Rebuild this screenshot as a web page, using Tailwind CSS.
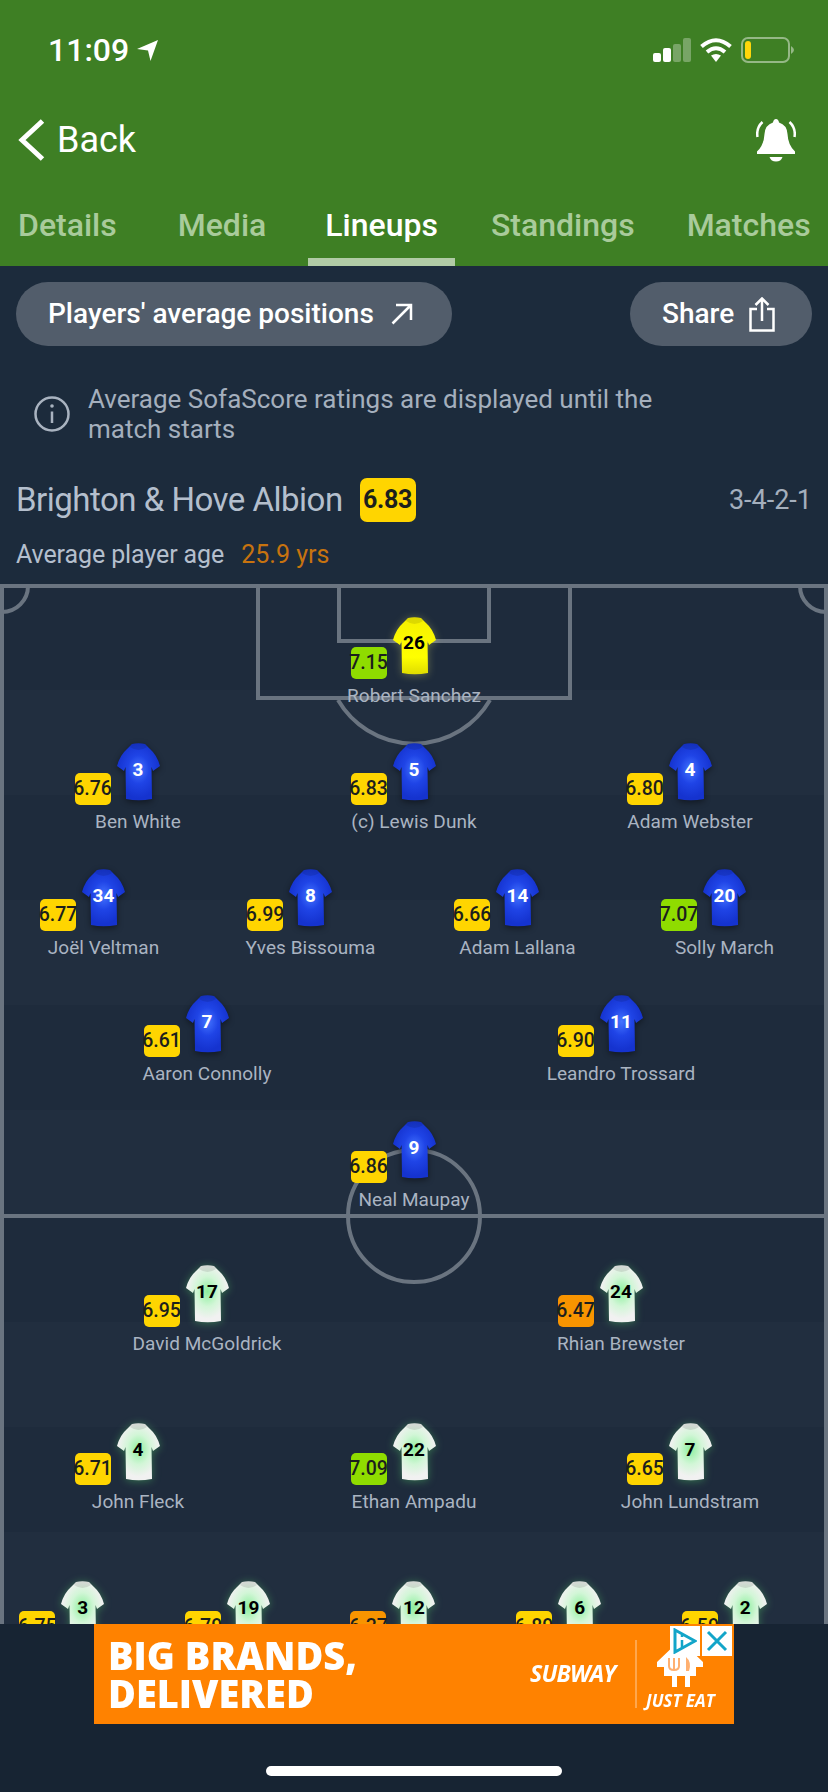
<!DOCTYPE html>
<html lang="en">

<head>
    <meta charset="UTF-8">
    <meta name="viewport" content="width=device-width, initial-scale=1.0">
    <title>Lineups</title>
    <script src="https://cdn.jsdelivr.net/npm/@tailwindcss/browser@4"></script>
</head>

<body class="bg-[#172433] font-['Roboto',sans-serif]">
    <!-- shared shirt shape -->
    <svg class="absolute w-0 h-0">
        <defs>
            <radialGradient id="blue" cx="50%" cy="46%" r="50%">
                <stop offset="0%" stop-color="#4474ff" />
                <stop offset="50%" stop-color="#1f44e6" />
                <stop offset="100%" stop-color="#1533cf" />
            </radialGradient>
            <radialGradient id="white" cx="50%" cy="46%" r="48%">
                <stop offset="0%" stop-color="#8def9d" />
                <stop offset="55%" stop-color="#d2f6d7" />
                <stop offset="100%" stop-color="#f1f1f1" />
            </radialGradient>
            <linearGradient id="yellow" x1="0" y1="0" x2="0" y2="1">
                <stop offset="0%" stop-color="#f6f000" />
                <stop offset="70%" stop-color="#ffff00" />
                <stop offset="100%" stop-color="#dfdc00" />
            </linearGradient>
            <symbol id="shirt" viewBox="0 0 43 58">
                <path d="M15 1Q21.500 -0.500 28 1L33 6Q40 12 43 23L36 28L34.500 24L35 56Q21.500 58.500 9 56L8.500 24L7 28L0 23Q3 12 10 6Z" />
                <path d="M15 1Q21.500 -0.500 28 1L30 4Q21.500 10 13 4Z" fill="#000" fill-opacity=".1" />
            </symbol>
        </defs>
    </svg>

    <div class="w-[828px] h-[1792px] flex flex-col overflow-hidden">
        <!-- Header -->
        <header class="bg-[#3e7f24] text-white h-[266px] shrink-0">
            <div class="h-[100px] flex items-center justify-between pl-[48px] pr-[33px]">
                <div class="flex items-center gap-[8px]">
                    <span class="text-[32px] font-medium">11:09</span>
                    <svg class="w-[21px] h-[21px]" viewBox="0 0 21 21" fill="#fff"><path d="M21 0L13.500 21L11 10.500L0 9Z" /></svg>
                </div>
                <div class="flex items-center">
                    <svg class="w-[38px] h-[24px]" viewBox="0 0 38 24">
                        <rect x="0" y="15" width="8" height="9" rx="2" fill="#fff" />
                        <rect x="10" y="10" width="8" height="14" rx="2" fill="#fff" />
                        <rect x="20" y="6" width="8" height="18" rx="2" fill="#fff" fill-opacity=".3" />
                        <rect x="30" y="0" width="8" height="24" rx="2" fill="#fff" fill-opacity=".3" />
                    </svg>
                    <svg class="w-[32px] h-[26px] ml-[9px]" viewBox="0 0 32 26" fill="none" stroke="#fff" stroke-width="4">
                        <path d="M1.500 9.500Q16 -3 30.500 9.500" />
                        <path d="M7 15Q16 7.500 25 15" />
                        <path d="M11 18.500L16 25L21 18.500Q16 15.500 11 18.500Z" fill="#fff" stroke="none" />
                    </svg>
                    <svg class="w-[54px] h-[26px] ml-[9px]" viewBox="0 0 54 26" fill="none">
                        <rect x="1" y="1" width="47" height="24" rx="6" stroke="#fff" stroke-opacity=".45" stroke-width="2" />
                        <rect x="4" y="4" width="6" height="18" rx="3" fill="#ffd60a" />
                        <path d="M50 9Q53 11 53 13Q53 15 50 17Z" fill="#fff" fill-opacity=".45" />
                    </svg>
                </div>
            </div>
            <div class="h-[80px] flex items-center justify-between pl-[18px] pr-[32px]">
                <div class="flex items-center gap-[12px]">
                    <svg class="w-[27px] h-[42px]" viewBox="0 0 27 42" fill="none" stroke="#fff" stroke-width="5"><path d="M24.500 2L4 21L24.500 40" /></svg>
                    <span class="text-[36px] leading-none">Back</span>
                </div>
                <svg class="w-[40px] h-[43px]" viewBox="0 0 40 43" fill="#fff">
                    <path d="M20 0Q22.500 0 23 3.500Q31 6 31.500 15Q32 26 39 32.500L39 35L1 35L1 32.500Q8 26 8.500 15Q9 6 17 3.500Q17.500 0 20 0Z" />
                    <path d="M13.500 38L26.500 38Q25 42.500 20 42.500Q15 42.500 13.500 38Z" />
                    <path d="M6.500 3Q0 9 1.500 18M33.500 3Q40 9 38.500 18" fill="none" stroke="#fff" stroke-width="2.500" />
                </svg>
            </div>
            <nav class="flex text-[32px] leading-[36px] font-medium text-[#a9cb9b] pl-[1px]">
                <a class="shrink-0 px-[17px] pt-[27px] pb-[15px] border-b-8 border-transparent">Details</a>
                <a class="shrink-0 px-[17px] pt-[27px] pb-[15px] border-b-8 border-transparent ml-[27px]">Media</a>
                <a class="shrink-0 px-[17px] pt-[27px] pb-[15px] border-b-8 border-[#b1cba6] text-white ml-[25px]">Lineups</a>
                <a class="shrink-0 px-[17px] pt-[27px] pb-[15px] border-b-8 border-transparent ml-[19px]">Standings</a>
                <a class="shrink-0 px-[17px] pt-[27px] pb-[15px] border-b-8 border-transparent ml-[18px]">Matches</a>
            </nav>
        </header>

        <!-- Actions and team summary -->
        <section class="bg-[#1c2b3c] h-[318px] shrink-0 pt-[16px]">
            <div class="flex justify-between px-[16px]">
                <button class="w-[436px] h-[64px] rounded-full bg-[#525d6b] text-white text-[28px] font-medium flex items-center pl-[32px] gap-[17px]">
                    Players' average positions
                    <svg class="w-[22px] h-[22px]" viewBox="0 0 22 22" fill="none" stroke="#fff" stroke-width="2.500"><path d="M1.500 20.500L20 2M5 2L20 2L20 17" /></svg>
                </button>
                <button class="w-[182px] h-[64px] rounded-full bg-[#525d6b] text-white text-[28px] font-medium flex items-center pl-[32px] gap-[15px]">
                    Share
                    <svg class="w-[26px] h-[35px]" viewBox="0 0 26 35" fill="none" stroke="#fff" stroke-width="2.500"><path d="M8 12L1.500 12L1.500 33.500L24.500 33.500L24.500 12L18 12M13 24L13 2M6.500 8L13 1.500L19.500 8" /></svg>
                </button>
            </div>
            <div class="flex items-center mt-[38px] pl-[34px] gap-[18px]">
                <svg class="w-[36px] h-[36px] shrink-0" viewBox="0 0 36 36" fill="none" stroke="#a9b3c0" stroke-width="2.500">
                    <circle cx="18" cy="18" r="16.500" />
                    <path d="M18 15.500L18 27" />
                    <circle cx="18" cy="10" r="1.800" fill="#a9b3c0" stroke="none" />
                </svg>
                <p class="text-[26px] leading-[30px] text-[#a4afbd] w-[600px]">Average SofaScore ratings are displayed until the match starts</p>
            </div>
            <div class="flex items-center justify-between mt-[31px] pl-[16px] pr-[16px]">
                <div class="flex items-center gap-[17px]">
                    <h2 class="text-[33px] tracking-[-0.5px] text-[#b4bfcd]">Brighton &amp; Hove Albion</h2>
                    <span class="w-[56px] h-[44px] rounded-[7px] bg-[#ffd500] text-[#1c1f1d] text-[25px] tracking-[-0.3px] font-bold flex items-center justify-center">6.83</span>
                </div>
                <span class="text-[27px] text-[#a4afbd]">3-4-2-1</span>
            </div>
            <div class="flex mt-[14px] pl-[16px] gap-[17px] text-[25px] leading-[32px]">
                <span class="text-[#b4bfcd] tracking-[-0.1px]">Average player age</span>
                <span class="text-[#c7730f]">25.9 yrs</span>
            </div>
        </section>

        <!-- Pitch -->
        <section class="relative h-[1040px] shrink-0 overflow-hidden bg-[#1e2b3c] text-[#aab4c2]">
            <svg class="absolute inset-0 w-[828px] h-[1040px]" viewBox="0 0 828 1040" fill="none" stroke="#6a7480" stroke-width="4">
                <g fill="#212e3f" stroke="none">
                    <rect x="0" y="106" width="828" height="105" />
                    <rect x="0" y="316" width="828" height="105" />
                    <rect x="0" y="526" width="828" height="106" />
                    <rect x="0" y="738" width="828" height="105" />
                    <rect x="0" y="948" width="828" height="92" />
                </g>
                <path d="M2 0L2 1040M826 0L826 1040M0 2L828 2M0 632L828 632" />
                <path d="M258 2L258 114L570 114L570 2M339 2L339 57L489 57L489 2" />
                <path d="M338 116A88 88 0 0 0 490 116" />
                <path d="M28 2A26 26 0 0 1 2 28M800 2A26 26 0 0 0 826 28" />
                <circle cx="414" cy="632" r="66" />
            </svg>

            <div class="relative">
                <!-- Brighton -->
                <div class="h-[632px] pt-[33px] flex flex-col">
                    <div class="h-[126px] flex">
                        <div class="flex-1 flex flex-col items-center">
                            <div class="relative w-[43px] h-[58px]">
                                <svg class="w-[43px] h-[58px] fill-[url(#yellow)] drop-shadow-[0_1px_4px_rgba(255,255,120,0.3)]"><use href="#shirt" /></svg>
                                <span class="absolute inset-x-0 top-[14px] text-center text-[19px] leading-[24px] font-bold text-black">26</span>
                                <span class="absolute left-[-42px] top-[30px] w-[36px] h-[32px] rounded-[5px] bg-[#8fdc00] text-[#1c1f1d] text-[19.5px] font-medium flex items-center justify-center">7.15</span>
                            </div>
                            <span class="mt-[9px] text-[19px] tracking-[0.05px] leading-[24px] whitespace-nowrap">Robert Sanchez</span>
                        </div>
                    </div>
                    <div class="h-[126px] flex">
                        <div class="flex-1 flex flex-col items-center">
                            <div class="relative w-[43px] h-[58px]">
                                <svg class="w-[43px] h-[58px] fill-[url(#blue)] drop-shadow-[0_2px_3px_rgba(0,0,0,0.45)]"><use href="#shirt" /></svg>
                                <span class="absolute inset-x-0 top-[15px] text-center text-[19px] leading-[24px] font-bold text-white">3</span>
                                <span class="absolute left-[-42px] top-[30px] w-[36px] h-[32px] rounded-[5px] bg-[#ffd500] text-[#1c1f1d] text-[19.5px] font-medium flex items-center justify-center">6.76</span>
                            </div>
                            <span class="mt-[9px] text-[19px] tracking-[0.05px] leading-[24px] whitespace-nowrap">Ben White</span>
                        </div>
                        <div class="flex-1 flex flex-col items-center">
                            <div class="relative w-[43px] h-[58px]">
                                <svg class="w-[43px] h-[58px] fill-[url(#blue)] drop-shadow-[0_2px_3px_rgba(0,0,0,0.45)]"><use href="#shirt" /></svg>
                                <span class="absolute inset-x-0 top-[15px] text-center text-[19px] leading-[24px] font-bold text-white">5</span>
                                <span class="absolute left-[-42px] top-[30px] w-[36px] h-[32px] rounded-[5px] bg-[#ffd500] text-[#1c1f1d] text-[19.5px] font-medium flex items-center justify-center">6.83</span>
                            </div>
                            <span class="mt-[9px] text-[19px] tracking-[0.05px] leading-[24px] whitespace-nowrap">(c) Lewis Dunk</span>
                        </div>
                        <div class="flex-1 flex flex-col items-center">
                            <div class="relative w-[43px] h-[58px]">
                                <svg class="w-[43px] h-[58px] fill-[url(#blue)] drop-shadow-[0_2px_3px_rgba(0,0,0,0.45)]"><use href="#shirt" /></svg>
                                <span class="absolute inset-x-0 top-[15px] text-center text-[19px] leading-[24px] font-bold text-white">4</span>
                                <span class="absolute left-[-42px] top-[30px] w-[36px] h-[32px] rounded-[5px] bg-[#ffd500] text-[#1c1f1d] text-[19.5px] font-medium flex items-center justify-center">6.80</span>
                            </div>
                            <span class="mt-[9px] text-[19px] tracking-[0.05px] leading-[24px] whitespace-nowrap">Adam Webster</span>
                        </div>
                    </div>
                    <div class="h-[126px] flex">
                        <div class="flex-1 flex flex-col items-center">
                            <div class="relative w-[43px] h-[58px]">
                                <svg class="w-[43px] h-[58px] fill-[url(#blue)] drop-shadow-[0_2px_3px_rgba(0,0,0,0.45)]"><use href="#shirt" /></svg>
                                <span class="absolute inset-x-0 top-[15px] text-center text-[19px] leading-[24px] font-bold text-white">34</span>
                                <span class="absolute left-[-42px] top-[30px] w-[36px] h-[32px] rounded-[5px] bg-[#ffd500] text-[#1c1f1d] text-[19.5px] font-medium flex items-center justify-center">6.77</span>
                            </div>
                            <span class="mt-[9px] text-[19px] tracking-[0.05px] leading-[24px] whitespace-nowrap">Joël Veltman</span>
                        </div>
                        <div class="flex-1 flex flex-col items-center">
                            <div class="relative w-[43px] h-[58px]">
                                <svg class="w-[43px] h-[58px] fill-[url(#blue)] drop-shadow-[0_2px_3px_rgba(0,0,0,0.45)]"><use href="#shirt" /></svg>
                                <span class="absolute inset-x-0 top-[15px] text-center text-[19px] leading-[24px] font-bold text-white">8</span>
                                <span class="absolute left-[-42px] top-[30px] w-[36px] h-[32px] rounded-[5px] bg-[#ffd500] text-[#1c1f1d] text-[19.5px] font-medium flex items-center justify-center">6.99</span>
                            </div>
                            <span class="mt-[9px] text-[19px] tracking-[0.05px] leading-[24px] whitespace-nowrap">Yves Bissouma</span>
                        </div>
                        <div class="flex-1 flex flex-col items-center">
                            <div class="relative w-[43px] h-[58px]">
                                <svg class="w-[43px] h-[58px] fill-[url(#blue)] drop-shadow-[0_2px_3px_rgba(0,0,0,0.45)]"><use href="#shirt" /></svg>
                                <span class="absolute inset-x-0 top-[15px] text-center text-[19px] leading-[24px] font-bold text-white">14</span>
                                <span class="absolute left-[-42px] top-[30px] w-[36px] h-[32px] rounded-[5px] bg-[#ffd500] text-[#1c1f1d] text-[19.5px] font-medium flex items-center justify-center">6.66</span>
                            </div>
                            <span class="mt-[9px] text-[19px] tracking-[0.05px] leading-[24px] whitespace-nowrap">Adam Lallana</span>
                        </div>
                        <div class="flex-1 flex flex-col items-center">
                            <div class="relative w-[43px] h-[58px]">
                                <svg class="w-[43px] h-[58px] fill-[url(#blue)] drop-shadow-[0_2px_3px_rgba(0,0,0,0.45)]"><use href="#shirt" /></svg>
                                <span class="absolute inset-x-0 top-[15px] text-center text-[19px] leading-[24px] font-bold text-white">20</span>
                                <span class="absolute left-[-42px] top-[30px] w-[36px] h-[32px] rounded-[5px] bg-[#8fdc00] text-[#1c1f1d] text-[19.5px] font-medium flex items-center justify-center">7.07</span>
                            </div>
                            <span class="mt-[9px] text-[19px] tracking-[0.05px] leading-[24px] whitespace-nowrap">Solly March</span>
                        </div>
                    </div>
                    <div class="h-[126px] flex">
                        <div class="flex-1 flex flex-col items-center">
                            <div class="relative w-[43px] h-[58px]">
                                <svg class="w-[43px] h-[58px] fill-[url(#blue)] drop-shadow-[0_2px_3px_rgba(0,0,0,0.45)]"><use href="#shirt" /></svg>
                                <span class="absolute inset-x-0 top-[15px] text-center text-[19px] leading-[24px] font-bold text-white">7</span>
                                <span class="absolute left-[-42px] top-[30px] w-[36px] h-[32px] rounded-[5px] bg-[#ffd500] text-[#1c1f1d] text-[19.5px] font-medium flex items-center justify-center">6.61</span>
                            </div>
                            <span class="mt-[9px] text-[19px] tracking-[0.05px] leading-[24px] whitespace-nowrap">Aaron Connolly</span>
                        </div>
                        <div class="flex-1 flex flex-col items-center">
                            <div class="relative w-[43px] h-[58px]">
                                <svg class="w-[43px] h-[58px] fill-[url(#blue)] drop-shadow-[0_2px_3px_rgba(0,0,0,0.45)]"><use href="#shirt" /></svg>
                                <span class="absolute inset-x-0 top-[15px] text-center text-[19px] leading-[24px] font-bold text-white">11</span>
                                <span class="absolute left-[-42px] top-[30px] w-[36px] h-[32px] rounded-[5px] bg-[#ffd500] text-[#1c1f1d] text-[19.5px] font-medium flex items-center justify-center">6.90</span>
                            </div>
                            <span class="mt-[9px] text-[19px] tracking-[0.05px] leading-[24px] whitespace-nowrap">Leandro Trossard</span>
                        </div>
                    </div>
                    <div class="h-[94px] flex">
                        <div class="flex-1 flex flex-col items-center">
                            <div class="relative w-[43px] h-[58px]">
                                <svg class="w-[43px] h-[58px] fill-[url(#blue)] drop-shadow-[0_2px_3px_rgba(0,0,0,0.45)]"><use href="#shirt" /></svg>
                                <span class="absolute inset-x-0 top-[15px] text-center text-[19px] leading-[24px] font-bold text-white">9</span>
                                <span class="absolute left-[-42px] top-[30px] w-[36px] h-[32px] rounded-[5px] bg-[#ffd500] text-[#1c1f1d] text-[19.5px] font-medium flex items-center justify-center">6.86</span>
                            </div>
                            <span class="mt-[9px] text-[19px] tracking-[0.05px] leading-[24px] whitespace-nowrap">Neal Maupay</span>
                        </div>
                    </div>
                </div>

                <!-- Sheffield United -->
                <div class="pt-[49px] flex flex-col">
                    <div class="h-[158px] flex">
                        <div class="flex-1 flex flex-col items-center">
                            <div class="relative w-[43px] h-[58px]">
                                <svg class="w-[43px] h-[58px] fill-[url(#white)] drop-shadow-[0_1px_4px_rgba(90,220,110,0.4)]"><use href="#shirt" /></svg>
                                <span class="absolute inset-x-0 top-[15px] text-center text-[19px] leading-[24px] font-bold text-black">17</span>
                                <span class="absolute left-[-42px] top-[30px] w-[36px] h-[32px] rounded-[5px] bg-[#ffd500] text-[#1c1f1d] text-[19.5px] font-medium flex items-center justify-center">6.95</span>
                            </div>
                            <span class="mt-[9px] text-[19px] tracking-[0.05px] leading-[24px] whitespace-nowrap">David McGoldrick</span>
                        </div>
                        <div class="flex-1 flex flex-col items-center">
                            <div class="relative w-[43px] h-[58px]">
                                <svg class="w-[43px] h-[58px] fill-[url(#white)] drop-shadow-[0_1px_4px_rgba(90,220,110,0.4)]"><use href="#shirt" /></svg>
                                <span class="absolute inset-x-0 top-[15px] text-center text-[19px] leading-[24px] font-bold text-black">24</span>
                                <span class="absolute left-[-42px] top-[30px] w-[36px] h-[32px] rounded-[5px] bg-[#f89400] text-[#1c1f1d] text-[19.5px] font-medium flex items-center justify-center">6.47</span>
                            </div>
                            <span class="mt-[9px] text-[19px] tracking-[0.05px] leading-[24px] whitespace-nowrap">Rhian Brewster</span>
                        </div>
                    </div>
                    <div class="h-[158px] flex">
                        <div class="flex-1 flex flex-col items-center">
                            <div class="relative w-[43px] h-[58px]">
                                <svg class="w-[43px] h-[58px] fill-[url(#white)] drop-shadow-[0_1px_4px_rgba(90,220,110,0.4)]"><use href="#shirt" /></svg>
                                <span class="absolute inset-x-0 top-[15px] text-center text-[19px] leading-[24px] font-bold text-black">4</span>
                                <span class="absolute left-[-42px] top-[30px] w-[36px] h-[32px] rounded-[5px] bg-[#ffd500] text-[#1c1f1d] text-[19.5px] font-medium flex items-center justify-center">6.71</span>
                            </div>
                            <span class="mt-[9px] text-[19px] tracking-[0.05px] leading-[24px] whitespace-nowrap">John Fleck</span>
                        </div>
                        <div class="flex-1 flex flex-col items-center">
                            <div class="relative w-[43px] h-[58px]">
                                <svg class="w-[43px] h-[58px] fill-[url(#white)] drop-shadow-[0_1px_4px_rgba(90,220,110,0.4)]"><use href="#shirt" /></svg>
                                <span class="absolute inset-x-0 top-[15px] text-center text-[19px] leading-[24px] font-bold text-black">22</span>
                                <span class="absolute left-[-42px] top-[30px] w-[36px] h-[32px] rounded-[5px] bg-[#8fdc00] text-[#1c1f1d] text-[19.5px] font-medium flex items-center justify-center">7.09</span>
                            </div>
                            <span class="mt-[9px] text-[19px] tracking-[0.05px] leading-[24px] whitespace-nowrap">Ethan Ampadu</span>
                        </div>
                        <div class="flex-1 flex flex-col items-center">
                            <div class="relative w-[43px] h-[58px]">
                                <svg class="w-[43px] h-[58px] fill-[url(#white)] drop-shadow-[0_1px_4px_rgba(90,220,110,0.4)]"><use href="#shirt" /></svg>
                                <span class="absolute inset-x-0 top-[15px] text-center text-[19px] leading-[24px] font-bold text-black">7</span>
                                <span class="absolute left-[-42px] top-[30px] w-[36px] h-[32px] rounded-[5px] bg-[#ffd500] text-[#1c1f1d] text-[19.5px] font-medium flex items-center justify-center">6.65</span>
                            </div>
                            <span class="mt-[9px] text-[19px] tracking-[0.05px] leading-[24px] whitespace-nowrap">John Lundstram</span>
                        </div>
                    </div>
                    <div class="h-[158px] flex">
                        <div class="flex-1 flex flex-col items-center">
                            <div class="relative w-[43px] h-[58px]">
                                <svg class="w-[43px] h-[58px] fill-[url(#white)] drop-shadow-[0_1px_4px_rgba(90,220,110,0.4)]"><use href="#shirt" /></svg>
                                <span class="absolute inset-x-0 top-[15px] text-center text-[19px] leading-[24px] font-bold text-black">3</span>
                                <span class="absolute left-[-42px] top-[30px] w-[36px] h-[32px] rounded-[5px] bg-[#ffd500] text-[#1c1f1d] text-[19.5px] font-medium flex items-center justify-center">6.75</span>
                            </div>
                        </div>
                        <div class="flex-1 flex flex-col items-center">
                            <div class="relative w-[43px] h-[58px]">
                                <svg class="w-[43px] h-[58px] fill-[url(#white)] drop-shadow-[0_1px_4px_rgba(90,220,110,0.4)]"><use href="#shirt" /></svg>
                                <span class="absolute inset-x-0 top-[15px] text-center text-[19px] leading-[24px] font-bold text-black">19</span>
                                <span class="absolute left-[-42px] top-[30px] w-[36px] h-[32px] rounded-[5px] bg-[#ffd500] text-[#1c1f1d] text-[19.5px] font-medium flex items-center justify-center">6.79</span>
                            </div>
                        </div>
                        <div class="flex-1 flex flex-col items-center">
                            <div class="relative w-[43px] h-[58px]">
                                <svg class="w-[43px] h-[58px] fill-[url(#white)] drop-shadow-[0_1px_4px_rgba(90,220,110,0.4)]"><use href="#shirt" /></svg>
                                <span class="absolute inset-x-0 top-[15px] text-center text-[19px] leading-[24px] font-bold text-black">12</span>
                                <span class="absolute left-[-42px] top-[30px] w-[36px] h-[32px] rounded-[5px] bg-[#f89400] text-[#1c1f1d] text-[19.5px] font-medium flex items-center justify-center">6.37</span>
                            </div>
                        </div>
                        <div class="flex-1 flex flex-col items-center">
                            <div class="relative w-[43px] h-[58px]">
                                <svg class="w-[43px] h-[58px] fill-[url(#white)] drop-shadow-[0_1px_4px_rgba(90,220,110,0.4)]"><use href="#shirt" /></svg>
                                <span class="absolute inset-x-0 top-[15px] text-center text-[19px] leading-[24px] font-bold text-black">6</span>
                                <span class="absolute left-[-42px] top-[30px] w-[36px] h-[32px] rounded-[5px] bg-[#ffd500] text-[#1c1f1d] text-[19.5px] font-medium flex items-center justify-center">6.89</span>
                            </div>
                        </div>
                        <div class="flex-1 flex flex-col items-center">
                            <div class="relative w-[43px] h-[58px]">
                                <svg class="w-[43px] h-[58px] fill-[url(#white)] drop-shadow-[0_1px_4px_rgba(90,220,110,0.4)]"><use href="#shirt" /></svg>
                                <span class="absolute inset-x-0 top-[15px] text-center text-[19px] leading-[24px] font-bold text-black">2</span>
                                <span class="absolute left-[-42px] top-[30px] w-[36px] h-[32px] rounded-[5px] bg-[#ffd500] text-[#1c1f1d] text-[19.5px] font-medium flex items-center justify-center">6.59</span>
                            </div>
                        </div>
                    </div>
                </div>
            </div>
        </section>

        <!-- Ad banner -->
        <section class="relative flex-1 bg-[#172433]">
            <div class="relative ml-[94px] w-[640px] h-[100px] bg-[#ff8200] text-white flex items-center">
                <p class="ml-[14px] text-[38px] leading-[38px] font-extrabold font-['Open_Sans',sans-serif] blur-[0.6px]">BIG BRANDS,<br>DELIVERED</p>
                <span class="absolute left-[436px] top-[37px] text-[23px] leading-[24px] font-bold italic font-['Open_Sans',sans-serif] tracking-[-0.8px] blur-[0.4px]">SUBWAY</span>
                <div class="absolute left-[541px] top-[16px] w-[2px] h-[68px] bg-white/30"></div>
                <svg class="absolute left-[561px] top-[16px] w-[50px] h-[50px] blur-[0.4px]" viewBox="0 0 50 50" fill="#fff">
                    <path d="M25 0L48 22L48 27L41 27L41 36L35 36L35 47L30 47L30 36L22 36L22 47L17 47L17 36L9 36L9 27L2 27L2 22Z" />
                    <path d="M14 18L14 26Q14 30 19 30Q24 30 24 26L24 18M19 18L19 30" fill="none" stroke="#ffb070" stroke-width="2" />
                    <path d="M31 17Q37 22 34 31L31 31Z" fill="#ffb070" />
                </svg>
                <span class="absolute left-[552px] top-[68px] text-[17px] leading-[18px] font-bold italic font-['Open_Sans',sans-serif] blur-[0.3px]">JUST EAT</span>
                <div class="absolute left-[576px] top-[2px] w-[30px] h-[30px] bg-white flex items-center justify-center">
                    <svg class="w-[24px] h-[26px]" viewBox="0 0 24 26" fill="none" stroke="#12a5c9" stroke-width="3"><path d="M2 2L22 13L2 24Z" /><path d="M9 12L9 19M9 7L9 9" stroke-width="2.500" /></svg>
                </div>
                <div class="absolute left-[608px] top-[2px] w-[30px] h-[30px] bg-white flex items-center justify-center">
                    <svg class="w-[24px] h-[24px]" viewBox="0 0 24 24" fill="none" stroke="#12a5c9" stroke-width="3"><path d="M3 3L21 21M21 3L3 21" /></svg>
                </div>
            </div>
            <div class="absolute left-[266px] top-[142px] w-[296px] h-[10px] rounded-full bg-white"></div>
        </section>
    </div>
</body>

</html>
